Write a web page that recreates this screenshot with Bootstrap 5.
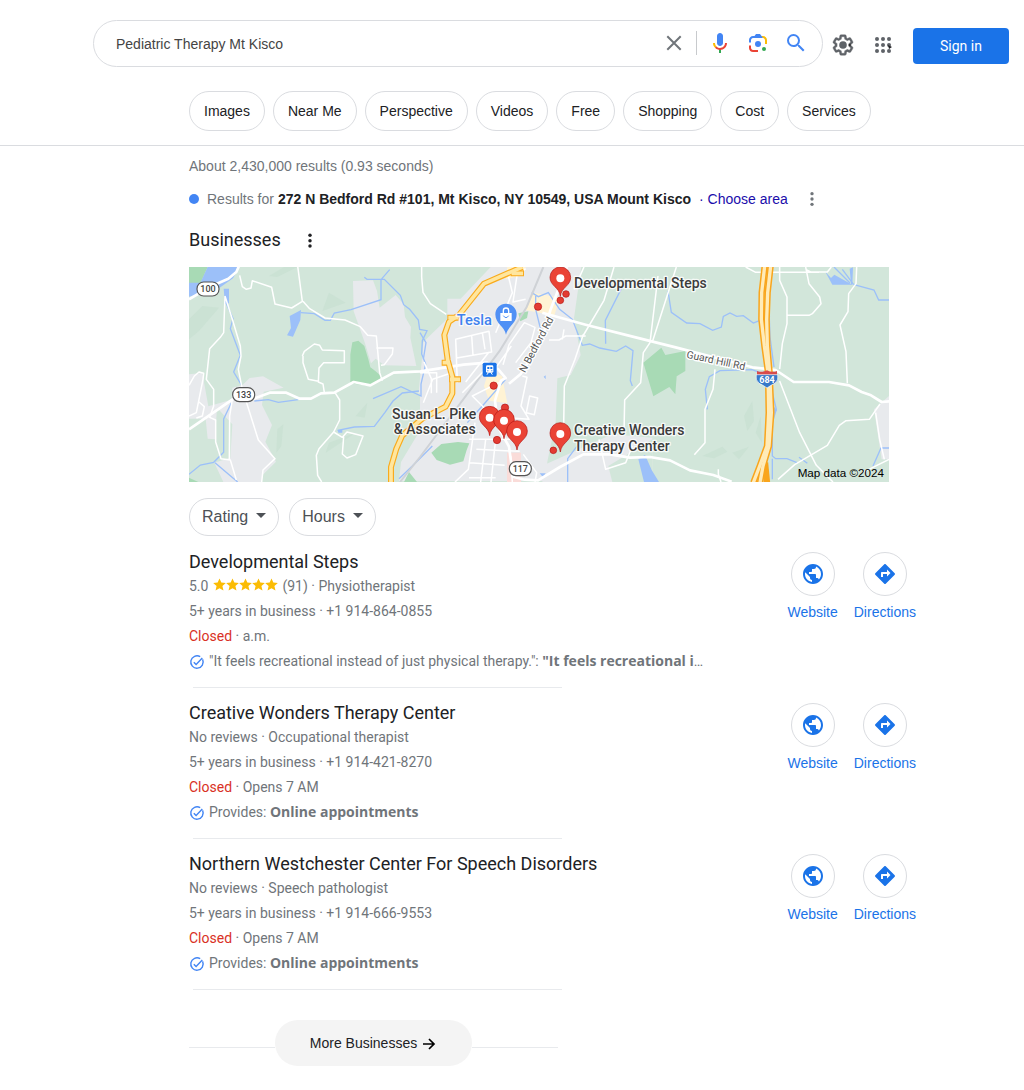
<!DOCTYPE html>
<html lang="en">
<head>
<meta charset="utf-8">
<meta name="viewport" content="width=device-width, initial-scale=1">
<title>Pediatric Therapy Mt Kisco - Search</title>
<link href="https://cdn.jsdelivr.net/npm/bootstrap@5.3.0/dist/css/bootstrap.min.css" rel="stylesheet">
<style>
  body { font: 14px/20px "Liberation Sans", Arial, sans-serif; color: #202124; background: #fff; }
  a { text-decoration: none; }
  svg { display: block; flex: none; }
  .top-bar { padding: 20px 15px 14px 93px; border-bottom: 1px solid #dadce0; }
  .search-box { height: 47px; border: 1px solid #dadce0; border-radius: 24px; padding: 0 14px 2px 22px; }
  .search-box input { border: 0; outline: 0; background: none; color: #444; padding: 2px 0 0; min-width: 0; }
  .plain-btn { border: 0; background: none; padding: 0; color: inherit; }
  .tool-gap { margin-right: 14px; }
  .split-line { width: 1px; height: 24px; background: #c8cacd; margin: 0 11px 0 10px; }
  .sign-in { background: #1a73e8; color: #fff; font: 14px/20px Roboto, sans-serif; width: 96px; height: 36px; border-radius: 4px; margin: 8px 0 0 18px; }
  .chips { margin: 24px 0 0 96px; }
  .chip { height: 40px; padding: 0 14px; border: 1px solid #dadce0; border-radius: 20px; color: #202124; display: flex; align-items: center; }
  .results { margin-left: 189px; max-width: 727px; padding-top: 10px; }
  .muted { color: #70757a; }
  .place-row { margin: 13px 0 19px; }
  .blue-dot { width: 10px; height: 10px; border-radius: 50%; background: #4285f4; margin-right: 8px; }
  .choose { color: #1a0dab; }
  .heading { font: 18px/24px Roboto, sans-serif; margin: 0; color: #202124; }
  .map { width: 100%; max-width: 700px; height: auto; margin-top: 15px; }
  .filters { padding: 16px 0 14px; gap: 10px; }
  .filter { height: 38px; padding: 0 12px; border: 1px solid #dadce0; border-radius: 19px; background: #fff; color: #4d5156; font-size: 16px; }
  .listing { padding-bottom: 13px; }
  .listing p { margin: 0; line-height: 25px; font-family: Roboto, sans-serif; color: #70757a; }
  .stars { margin: 0 4px 4px 5px; }
  .short-rule { max-width: 369px; height: 1px; background: #e8eaed; margin: 0 0 13px 4px; }
  .closed { color: #d93025; }
  .info { min-width: 0; }
  .info b { font: 700 14px/14px "Open Sans", "Noto Sans", sans-serif; }
  .action { color: #1a73e8; text-align: center; padding-top: 2px; }
  .ring { width: 44px; height: 44px; border: 1px solid #dadce0; border-radius: 50%; margin: 0 auto 6px; }
  .more-wrap { max-width: 369px; margin-top: 30px; padding-bottom: 24px; }
  .more-wrap .line { height: 1px; background: #e8eaed; margin-top: 8px; }
  .more { height: 46px; width: 197px; border-radius: 23px; background: #f4f4f4; color: #202124; }
  .poi { font: 500 42px Roboto, sans-serif; fill: #3c3c3c; stroke: #fff; stroke-width: 8px; stroke-opacity: .8; paint-order: stroke; stroke-linejoin: round; }
  .poi-shop { font-size: 44px; fill: #3f82ee; }
  .road-name { font: 31px Roboto, sans-serif; fill: #555; stroke: #fff; stroke-width: 8px; paint-order: stroke; }
  .route-no { font: 500 27px Roboto, sans-serif; fill: #444; text-anchor: middle; }
</style>
<script src="https://cdn.jsdelivr.net/npm/bootstrap@5.3.0/dist/js/bootstrap.bundle.min.js"></script>
</head>
<body>
<svg width="0" height="0" class="position-absolute" aria-hidden="true">
  <symbol id="globe" viewBox="0 0 24 24"><path fill="#1a73e8" d="M12 2C6.480 2 2 6.480 2 12s4.480 10 10 10 10-4.480 10-10S17.520 2 12 2zm-1 17.930c-3.950-.49-7-3.850-7-7.930 0-.62.08-1.210.21-1.790L9 15v1c0 1.100.9 2 2 2v1.930zm6.900-2.540c-.26-.81-1-1.390-1.900-1.390h-1v-3c0-.55-.45-1-1-1H8v-2h2c.55 0 1-.45 1-1V7h2c1.100 0 2-.9 2-2v-.41c2.930 1.190 5 4.060 5 7.410 0 2.080-.8 3.970-2.100 5.390z"/></symbol>
  <symbol id="turn" viewBox="0 0 24 24"><path fill="#1a73e8" d="M21.710 11.290l-9-9c-.39-.39-1.020-.39-1.410 0l-9 9c-.39.39-.39 1.020 0 1.410l9 9c.39.39 1.020.39 1.410 0l9-9c.39-.38.39-1.010 0-1.410zM14 14.500V12h-4v3H8v-4c0-.55.45-1 1-1h5V7.500l3.500 3.500-3.500 3.500z"/></symbol>
  <symbol id="tick" viewBox="0 0 16 16"><path d="M13.600 5.400A6.200 6.200 0 1 1 11.200 2.700" fill="none" stroke="#4285f4" stroke-width="1.400"/><path d="M4.800 8.200l2.300 2.300 6.200-6.400" fill="none" stroke="#4285f4" stroke-width="1.400"/></symbol>
  <symbol id="star" viewBox="0 0 24 24"><path fill="#fbbc04" d="M12 .8l3.400 7.700 8.300.8-6.300 5.500 1.900 8.200L12 18.700 4.700 23l1.900-8.200L.3 9.300l8.300-.8z"/></symbol>
  <symbol id="pin" viewBox="-34 -90 68 92"><path d="M0 0C-3-28-31-31-31-57a31 31 0 0 1 62 0C31-31 3-28 0 0z" fill="#ea4335" stroke="#b31412" stroke-width="2"/><circle cy="-54" r="12" fill="#fff"/></symbol>
</svg>

<header class="top-bar">
  <div class="d-flex align-items-start">
    <form class="search-box d-flex align-items-center flex-grow-1" onsubmit="return false">
      <input class="flex-grow-1" type="text" aria-label="Search" value="Pediatric Therapy Mt Kisco">
      <button class="plain-btn" type="button" aria-label="Clear"><svg width="24" height="24" viewBox="0 0 24 24"><path d="M5.300 5.300l13.400 13.400M18.700 5.300L5.300 18.700" stroke="#70757a" stroke-width="2"/></svg></button>
      <span class="split-line"></span>
      <button class="plain-btn tool-gap" type="button" aria-label="Search by voice"><svg width="24" height="24" viewBox="0 0 24 24"><path fill="#4285f4" d="m12 15c1.660 0 3-1.310 3-2.970v-7.020c0-1.660-1.340-3.010-3-3.010s-3 1.340-3 3.010v7.020c0 1.660 1.340 2.970 3 2.970z"/><path fill="#34a853" d="m11 18.080h2v3.920h-2z"/><path fill="#fbbc05" d="m7.050 16.870c-1.270-1.330-2.050-2.830-2.050-4.870h2c0 1.450.56 2.420 1.470 3.380v.32l-1.150 1.180z"/><path fill="#ea4335" d="m12 16.930a4.970 5.250 0 0 1-3.540-1.550l-1.410 1.490c1.260 1.340 3.020 2.130 4.950 2.130 3.870 0 6.990-2.920 6.990-7h-1.990c0 2.920-2.240 4.930-5 4.930z"/></svg></button>
      <button class="plain-btn tool-gap" type="button" aria-label="Search by image"><svg width="24" height="24" viewBox="0 0 192 192"><circle fill="#34a853" cx="144" cy="144" r="16"/><circle fill="#4285f4" cx="96" cy="104" r="24"/><path fill="#ea4335" d="M24 135.200c0 18.110 14.690 32.800 32.800 32.800H96v-16l-40.100-.1c-8.800 0-15.900-8.190-15.900-17.900v-18H24z"/><path fill="#fbbc05" d="M168 72.800c0-18.110-14.690-32.800-32.800-32.800H116l20 16c8.800 0 16 8.290 16 18v30h16z"/><path fill="#4285f4" d="M112 24H80L68 40H56.800C38.690 40 24 54.690 24 72.800V92h16V74c0-9.710 7.200-18 16-18h80z"/></svg></button>
      <button class="plain-btn" type="submit" aria-label="Search"><svg width="24" height="24" viewBox="0 0 24 24"><path fill="#4285f4" d="M15.500 14h-.79l-.28-.27A6.471 6.471 0 0 0 16 9.500 6.500 6.500 0 1 0 9.500 16c1.610 0 3.090-.59 4.230-1.570l.27.28v.79l5 4.990L20.490 19l-4.990-5zm-6 0C7.010 14 5 11.990 5 9.500S7.010 5 9.500 5 14 7.010 14 9.500 11.990 14 9.500 14z"/></svg></button>
    </form>
    <div class="d-flex align-items-center pt-1">
      <button class="plain-btn ms-2" type="button" aria-label="Settings"><svg width="24" height="42" viewBox="0 0 24 24"><path fill="#5f6368" d="M13.850 22.250h-3.700c-.74 0-1.360-.54-1.450-1.270l-.27-1.890c-.27-.14-.53-.29-.79-.46l-1.800.72c-.7.26-1.470-.03-1.810-.65L2.200 15.530c-.35-.66-.2-1.440.36-1.880l1.530-1.190c-.01-.15-.02-.3-.02-.46 0-.15.01-.31.02-.46l-1.520-1.190c-.59-.45-.74-1.260-.37-1.880l1.850-3.190c.34-.62 1.110-.9 1.790-.63l1.810.73c.26-.17.52-.32.78-.46l.27-1.910c.09-.7.710-1.250 1.440-1.250h3.700c.74 0 1.360.54 1.450 1.270l.27 1.890c.27.14.53.29.79.46l1.800-.72c.71-.26 1.480.03 1.820.65l1.840 3.180c.36.66.2 1.440-.36 1.880l-1.520 1.190c.01.15.02.3.02.46s-.01.31-.02.46l1.520 1.190c.56.45.72 1.230.37 1.860l-1.860 3.220c-.34.62-1.110.9-1.800.63l-1.800-.72c-.26.17-.52.32-.78.46l-.27 1.910c-.1.680-.72 1.220-1.460 1.220zm-3.230-2h2.760l.37-2.550.53-.22c.44-.18.88-.44 1.340-.78l.45-.34 2.380.96 1.380-2.400-2.030-1.580.07-.56c.03-.26.06-.51.06-.78s-.03-.53-.06-.78l-.07-.56 2.030-1.580-1.390-2.400-2.390.96-.45-.35c-.42-.32-.87-.58-1.330-.77l-.52-.22-.37-2.550h-2.760l-.37 2.550-.53.21c-.44.19-.88.44-1.340.79l-.45.33-2.380-.95-1.390 2.390 2.030 1.580-.07.56a7 7 0 0 0-.06.79c0 .26.02.53.06.78l.07.56-2.030 1.580 1.380 2.400 2.390-.96.45.35c.43.33.86.58 1.330.77l.53.22z" stroke="#5f6368" stroke-width=".4"/><circle cx="12" cy="12" r="3.800" fill="#5f6368"/><path d="M17 12l2.500-1.500v3z" fill="#222"/></svg></button>
      <button class="plain-btn ms-3" type="button" aria-label="Apps"><svg width="24" height="42" viewBox="0 0 24 24" fill="#5f6368"><g id="dots"><circle cx="6" cy="6" r="2"/><circle cx="12" cy="6" r="2"/><circle cx="18" cy="6" r="2"/></g><use href="#dots" y="6"/><use href="#dots" y="12"/><path d="M17 12l4 2-3 2z" fill="#202124"/></svg></button>
    </div>
    <button class="plain-btn sign-in" type="button">Sign in</button>
  </div>
  <nav class="chips d-flex flex-wrap gap-2" aria-label="Refine">
    <a class="chip" href="#">Images</a><a class="chip" href="#">Near Me</a><a class="chip" href="#">Perspective</a><a class="chip" href="#">Videos</a><a class="chip" href="#">Free</a><a class="chip" href="#">Shopping</a><a class="chip" href="#">Cost</a><a class="chip" href="#">Services</a>
  </nav>
</header>

<main class="results">
  <div class="muted">About 2,430,000 results (0.93 seconds)</div>
  <div class="d-flex align-items-center place-row">
    <span class="blue-dot"></span>
    <span class="muted me-1">Results for</span>
    <strong>272 N Bedford Rd #101, Mt Kisco, NY 10549, USA Mount Kisco</strong>
    <span class="choose ms-2">· <a class="choose" href="#">Choose area</a></span>
    <button class="plain-btn ms-3" type="button" aria-label="Location options"><svg width="16" height="16" viewBox="0 0 24 24" fill="#70757a"><circle cx="12" cy="4" r="2.500"/><circle cx="12" cy="12" r="2.500"/><circle cx="12" cy="20" r="2.500"/></svg></button>
  </div>
  <div class="d-flex align-items-center">
    <h1 class="heading">Businesses</h1>
    <button class="plain-btn ms-3" type="button" aria-label="About these results"><svg width="26" height="16" viewBox="0 0 24 24" fill="#202124"><circle cx="12" cy="5" r="2.600"/><circle cx="12" cy="13" r="2.600"/><circle cx="12" cy="21" r="2.600"/></svg></button>
  </div>

  <svg class="map" viewBox="0 3 2100 645" role="img" aria-label="Map of results around Mount Kisco">
    <rect width="2100" height="651" fill="#d2e6da"/>
    <!-- built-up areas -->
    <g fill="#e8eaed">
      <path d="M492 45l60-2 12 32 8 50 48-38 24 28 4 38 18 30-2 32 18 85-96-2-26-20-14 14-18-60-34-96z"/>
      <path d="M905 3L815 98h-40v60l-72 70-5 60-10 100 8 100-60 100-6 57h440l5-58 25-120 5-130 40-10 30-60-20-110 22-157z"/>
      <path d="M1070 595l200-90 120 10 0 133h-330z"/>
      <path d="M160 358l22-22 40-5 62 34-60 12-5 40 30 60-20 50 32 60-40 40-5 25H105L76 590l48-15 6-100-46-50-6 95-22-2-6-60H0V325l40-4 18 100 70-20 2-36z"/>
      <path d="M2055 430l45-40v190h-22z"/>
    </g>
    <g fill="#d2e6da"><path d="M1258 600l132-80v128h-120z"/><path d="M693 380v80l-50 30-3-60z"/></g>
    <!-- terrain shading -->
    <g fill="#c8dfd2" opacity=".7"><path d="M40 120l50 5-60 70L0 220v-60zM240 30l45-27 40 0-60 30zM420 80l50 30-70 25zM265 490l18-15-6 65-15 20zM500 450l35-40-8 45zM1665 450l25-45 5 60-20 30zM1700 500l15-50 4 80zM1540 570l60-28 15 15-40 20zM1630 560l50-18-30 38zM420 530l80-30-90 60z"/></g>
    <!-- parks -->
    <g fill="#a8dab5"><path d="M484 265l6-36 18-5 18 16 12 40 6 24 14 10 22 20-38 26-58-8z"/><path d="M0 3h56L34 52H0z"/><path d="M727 560l30-26 50-6 34 4-8 20-10 34-40 10-40-14z"/><path d="M1363 290l54-45 12 22 60-12v60l-26 16-4 54-18-22-48 28z"/><path d="M988 142l30-6-4 20-20 10z"/><path d="M645 648l15-30 24 30zM0 635l28 13H0z"/></g>
    <g fill="#fff3d4"><path d="M1034 80l78 15-16 54-90-18zM885 360l14-45 40 15 16 82-55-8zM955 3h55l-10 25-50 12z"/></g>
    <path fill="#fadcd9" d="M954 560h42v88h-42z"/>
    <!-- water -->
    <g fill="#9cc0f9"><path d="M56 3h96l-20 34-40 28L0 92V50h34zM104 68h16v44l-12 2z"/><path d="M302 150l34-18-2 30-22 50-18-4 12-22z"/><path d="M1348 580l20-14 20 46 22 36h-45z"/><path d="M1908 16l18 20 10-10 50 28-4-46 10-4-2 52h-60zM1752 420l12 12-12 18zM446 492h14v8h-12zM1064 332l6-4v12zM1052 622h18l-8 12z"/></g>
    <g fill="none" stroke="#9cc0f9" stroke-width="4">
      <path d="M110 108l22 50-8 30 30 80-20 50 24 40M336 140l40 3 32 20 16 0 12-22 50-10 90-30 0-60 26-30M526 34l8 6h52l48 48 10 28 18 14 26 32 4 28 22 4-14 30-2 40 12 30-14 60v36l-60-28-84 36M196 405l42-4 30 8 60-8"/>
      <path d="M690 375l-50 6-28 24-24 34-32 42-60 2-50 10M0 625l34-28 40-8 30-30 0-100 24-50M78 590l68 58M693 200l18 30-8 50M730 540l-60 60-40 38"/>
      <path d="M1028 80l20 12 30-12 34 50 38 30 30 78 22-4 30 12 50 10 28-16 22 14-8 90 6 16M1297 68l-48 95 1 70M1040 90l0 40 14 56M950 340l-70 80-45 50M1136 648v-70l36-48"/>
      <path d="M1437 75l10 64 46 32 40 2 38 20 26-10 6-32 20-10 20 10 20-2 30 22 50-20M1745 3v30l-6 70 4 110 12 90M1555 430l-6-60 12-38 32-18 96-3 60 22M1750 380l12 50-12 40v100l10 8h34l30 12M1750 578v62M1830 574l25 18M2100 546h-24l-24 54M1935 3l48 48M1960 10l34 46M1995 56l60 16 14 30h31"/>
    </g>
    <!-- rail -->
    <path d="M1063 3l-50 120-80 130-240 320-60 75" stroke="#cfd2d6" stroke-width="6" fill="none"/>
    <!-- local roads -->
    <g fill="none" stroke="#fff" stroke-width="4.500" stroke-linejoin="round">
      <path d="M152 28l8 34 12 8 14-4 4-22 58 20 10 50 50 12 32-20-14-106M342 106l20 22 46 28 60 6 46 20 22 26 26 2 10 110 8 24M562 246h50l-2 18-24 32-10 2M340 270l6-14 30-22 16 4 8 14 66 2v36l-62 0-14 16-2 42 14 6 4 26M388 346l-30-6-16-50v-20M438 380l14 22v60l-18 36 26 16 14-16 48 12-22 56-26 10-14-12 4-52M434 498l-44 50-8 20 4 60 12 20"/>
      <path d="M108 90l-4 110-10 14-32 34-10 92 22 30v50l-12 34 18 8 0 66 16 50 28 4 18 60M108 90l22 70 24 80 2 30-8 40 12 60 48 152 50 56-36 34-4 36M0 358l16-28 14-12 14 4-2 18-20 100-22 10M30 408l16 14-6 28-18 6M130 400l-8 50-1 130"/>
      <path d="M698 3v30l4 46 22 34 48 32M705 288l22 50 0 44M693 320h50v60M703 410l28-70 58-20M800 220l100-24 8 62-105 18zM800 220l5 130M848 208l4 60M880 200l8 50M900 258l-70 90M920 200l50-120-12-50M967 240l-50 70M980 290l46-60 12-46-32-14-46 66-18 60M1010 100l-38 8 12-80 26-20M1000 330l14 4-18 86 24 40-80-6M1022 390l24 6-10 50-24-6zM930 350l-80 40 60 60M820 380l70-70M1080 222h30l20-12h60M1120 220l5-30M840 520h145M858 470l-20 140-40 38M862 550l130 6M842 590l105 8M840 635h80M890 520l-15 128M920 520l-14 128M965 570l5 78M1003 565l40 55-5 28M1155 70l30-67"/>
      <path d="M1183 205l-25 75-32 80-2 120M1275 3l-30 100-65 110M1407 30l-24 200-20 30-8 90-48 52-2 100M1462 3L1390 228M1230 520l20 90 60-20 20-50M1578 310l-6 60-24 60v100l-32 36"/>
      <path d="M1670 3l30 16 190 0M1772 3v40l22 50v80l-14 60-8 76M1850 3l10 50 32 40 4 20-26 30-10 5-66 0M1853 12l12 6 50 0 12-15M2003 3l-2 50-22 30-2 54-24 40 18 80 4 95M1772 345l60 155 50 98 50 50M1767 640l50-44 98-58 36-60 20-14 70-4 32-46M2060 440l12 80 14 60M1588 610v15l8 23M2020 620l80-40"/>
    </g>
    <g fill="none" stroke="#fff" stroke-width="8" stroke-linejoin="round">
      <path d="M0 100l60-36 58-26 24-20 8-18M0 490l134-92M190 400l52-20 50 0 40 18h34l30-16 40-2 58-32 50 10 70-38 80-4 130-20 70-6 34 20 22 26-14 8-18 60 10 80 32 58 12 90 35 9 40 2 66-40 70-38h80l60 10 60-2 60 10 60 30 70 14 55 20"/>
      <path d="M1134 3l-50 130-26 90-62 100-36 30M1060 140l130 36 150 38 120 30 230 60 70 8 54 36 106 0 60 10 38 20 28 10 32 20 24-2"/>
    </g>
    <!-- highways -->
    <g fill="none" stroke-linejoin="round">
      <g stroke="#f9ab1d" stroke-width="18"><path id="hw-west" d="M1000 3l-115 50-75 94-30 20-14 40 10 75 14 50 0 50-20 40-70 36-60 50-18 40-16 55v50"/><path d="M965 22h40M775 155h34M758 290h24M780 340h36"/></g>
      <g stroke="#ffe69e" stroke-width="11"><use href="#hw-west"/><path d="M968 22h34M778 155h30M761 290h22M783 340h30"/></g>
      <g stroke="#f9a51c" stroke-width="19"><path id="lane-a" d="M1727 0l-9 80-1 80 9 80 11 80 2 120-5 100-22 60-19 50"/><path id="lane-b" d="M1745 0l-9 80-3 80 2 80 7 80 5 120-7 100-18 60-9 50"/><path d="M1728 590l6 60"/></g>
      <g stroke="#ffebb8" stroke-width="10"><use href="#lane-a"/><use href="#lane-b"/></g>
    </g>
    <!-- route shields -->
    <g fill="#fff" stroke="#555" stroke-width="3.500"><rect x="24" y="48" width="66" height="42" rx="20"/><rect x="131" y="365" width="66" height="42" rx="20"/><rect x="961" y="587" width="66" height="42" rx="20"/></g>
    <g class="route-no"><text x="57" y="79">100</text><text x="164" y="396">133</text><text x="994" y="618">117</text></g>
    <path d="M1704 315q15 6 30-2 15 8 30 2v18h-60z" fill="#d84b4b"/><path d="M1702 326h64q4 16-8 26-10 4-24 14-14-10-24-14-12-10-8-26z" fill="#3778c8" stroke="#fff" stroke-width="2"/>
    <text x="1734" y="352" text-anchor="middle" font-family="Roboto" font-weight="700" font-size="27" fill="#fff">684</text>
    <!-- road names -->
    <text class="road-name" transform="translate(1008 322) rotate(-62)">N Bedford Rd</text>
    <text class="road-name" transform="translate(1491 275) rotate(12)">Guard Hill Rd</text>
    <!-- places -->
    <g><path d="M951 206c-4-24-32-33-32-61a32 32 0 0 1 64 0c0 28-28 37-32 61z" fill="#4f90f5"/><path d="M934 141h34v24h-34z" fill="#fff"/><path d="M943 141v-7a8 8 0 0 1 16 0v7" fill="none" stroke="#fff" stroke-width="4"/><path d="M943 149q8 12 16 0" fill="none" stroke="#4f90f5" stroke-width="3"/></g>
    <text x="909" y="176" text-anchor="end" class="poi poi-shop">Tesla</text>
    <rect x="881" y="290" width="42" height="42" rx="5" fill="#1a73e8"/><rect x="891" y="298" width="22" height="22" rx="4" fill="#fff"/><path d="M895 303h6v6h-6zM904 303h6v6h-6z" fill="#1a73e8"/><path d="M895 313h3v3h-3zM907 313h3v3h-3z" fill="#1a73e8"/><path d="M894 326l4-6M910 326l-4-6" stroke="#fff" stroke-width="3"/>
    <g fill="#e33b32" stroke="#b31412" stroke-width="2"><circle cx="1131" cy="84" r="10"/><circle cx="1114" cy="103" r="10"/><circle cx="1047" cy="122" r="11"/><circle cx="914" cy="359" r="11"/><circle cx="948" cy="425" r="11"/><circle cx="924" cy="522" r="11"/><circle cx="1093" cy="553" r="10"/></g>
    <g><use href="#pin" x="1080" y="1" width="68" height="92"/><use href="#pin" x="868" y="419" width="68" height="92"/><use href="#pin" x="911" y="428" width="68" height="92"/><use href="#pin" x="950" y="462" width="68" height="92"/><use href="#pin" x="1080" y="468" width="68" height="92"/></g>
    <g class="poi"><text x="1155" y="66">Developmental Steps</text><text x="862" y="458" text-anchor="end">Susan L. Pike</text><text x="860" y="504" text-anchor="end">&amp; Associates</text><text x="1155" y="508">Creative Wonders</text><text x="1155" y="555">Therapy Center</text></g>
    <text x="2085" y="633" text-anchor="end" font-family="Liberation Sans" font-size="35" fill="#000">Map data ©2024</text>
  </svg>

  <div class="d-flex filters">
    <button class="filter d-flex align-items-center" type="button">Rating<svg class="ms-2 mb-1" width="10" height="8" viewBox="0 0 10 8"><path d="M0 2h10L5 7z" fill="#4d5156"/></svg></button>
    <button class="filter d-flex align-items-center" type="button">Hours<svg class="ms-2 mb-1" width="10" height="8" viewBox="0 0 10 8"><path d="M0 2h10L5 7z" fill="#4d5156"/></svg></button>
  </div>

  <section class="listing d-flex justify-content-between">
    <div class="info">
      <h2 class="heading">Developmental Steps</h2>
      <p class="d-flex align-items-center">5.0<span class="d-flex stars"><svg width="13" height="13"><use href="#star"/></svg><svg width="13" height="13"><use href="#star"/></svg><svg width="13" height="13"><use href="#star"/></svg><svg width="13" height="13"><use href="#star"/></svg><svg width="13" height="13"><use href="#star"/></svg></span>(91) · Physiotherapist</p>
      <p>5+ years in business · +1 914-864-0855</p>
      <p><span class="closed">Closed</span> · a.m.</p>
      <p class="d-flex align-items-center"><svg class="me-1" width="16" height="16"><use href="#tick"/></svg><span>"It feels recreational instead of just physical therapy.": <b>"It feels recreational i</b>…</span></p>
    </div>
    <div class="d-flex gap-3">
      <a class="action" href="#"><span class="ring d-flex align-items-center justify-content-center"><svg width="24" height="24"><use href="#globe"/></svg></span>Website</a>
      <a class="action" href="#"><span class="ring d-flex align-items-center justify-content-center"><svg width="24" height="24"><use href="#turn"/></svg></span>Directions</a>
    </div>
  </section>
  <div class="short-rule"></div>

  <section class="listing d-flex justify-content-between">
    <div class="info">
      <h2 class="heading">Creative Wonders Therapy Center</h2>
      <p>No reviews · Occupational therapist</p>
      <p>5+ years in business · +1 914-421-8270</p>
      <p><span class="closed">Closed</span> · Opens 7 AM</p>
      <p class="d-flex align-items-center"><svg class="me-1" width="16" height="16"><use href="#tick"/></svg><span>Provides: <b>Online appointments</b></span></p>
    </div>
    <div class="d-flex gap-3">
      <a class="action" href="#"><span class="ring d-flex align-items-center justify-content-center"><svg width="24" height="24"><use href="#globe"/></svg></span>Website</a>
      <a class="action" href="#"><span class="ring d-flex align-items-center justify-content-center"><svg width="24" height="24"><use href="#turn"/></svg></span>Directions</a>
    </div>
  </section>
  <div class="short-rule"></div>

  <section class="listing d-flex justify-content-between">
    <div class="info">
      <h2 class="heading">Northern Westchester Center For Speech Disorders</h2>
      <p>No reviews · Speech pathologist</p>
      <p>5+ years in business · +1 914-666-9553</p>
      <p><span class="closed">Closed</span> · Opens 7 AM</p>
      <p class="d-flex align-items-center"><svg class="me-1" width="16" height="16"><use href="#tick"/></svg><span>Provides: <b>Online appointments</b></span></p>
    </div>
    <div class="d-flex gap-3">
      <a class="action" href="#"><span class="ring d-flex align-items-center justify-content-center"><svg width="24" height="24"><use href="#globe"/></svg></span>Website</a>
      <a class="action" href="#"><span class="ring d-flex align-items-center justify-content-center"><svg width="24" height="24"><use href="#turn"/></svg></span>Directions</a>
    </div>
  </section>
  <div class="short-rule"></div>

  <div class="more-wrap d-flex align-items-center">
    <span class="line flex-grow-1"></span>
    <a class="more d-flex align-items-center justify-content-center" href="#">More Businesses<svg class="ms-1" width="16" height="16" viewBox="0 0 16 16"><path d="M2 9h11M8 4l5 5-5 5" fill="none" stroke="#000" stroke-width="1.700"/></svg></a>
    <span class="line flex-grow-1"></span>
  </div>
</main>
</body>
</html>
